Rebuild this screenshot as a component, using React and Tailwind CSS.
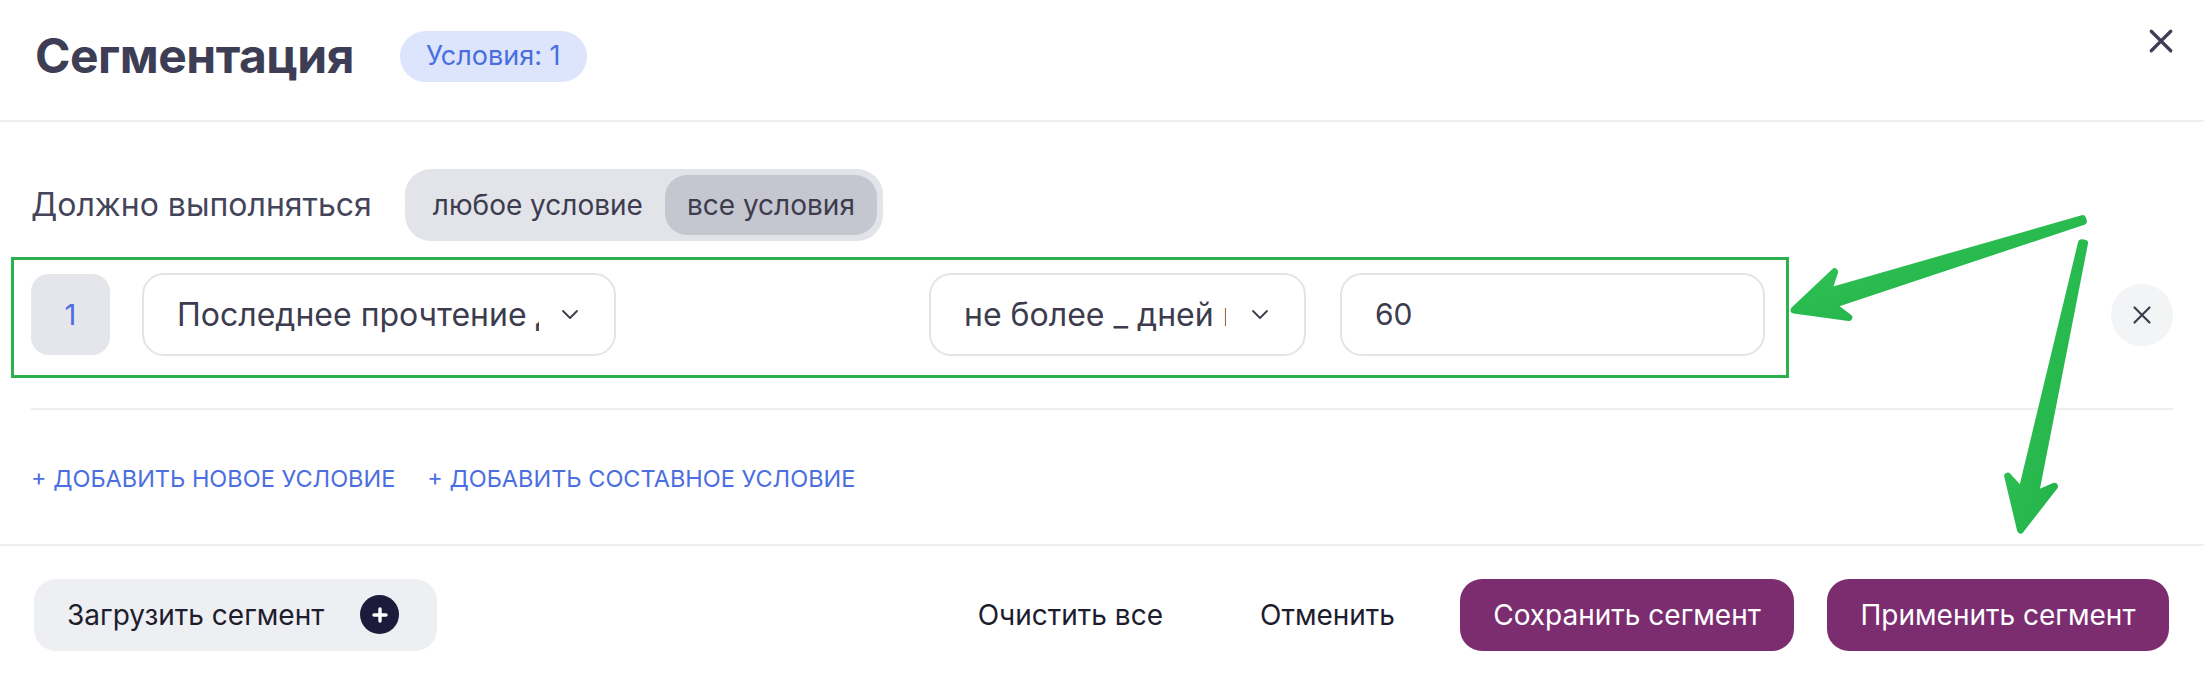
import React from "react";

function XIcon({ size = 26, stroke = 3, color = "#3d3e55" }) {
  return (
    <svg width={size} height={size} viewBox="0 0 24 24" fill="none" stroke={color} strokeWidth={stroke} strokeLinecap="round">
      <path d="M3 3 L21 21 M21 3 L3 21" />
    </svg>
  );
}

function Chevron() {
  return (
    <svg width="20" height="12" viewBox="0 0 20 12" fill="none" stroke="#3c3c4e" strokeWidth="1.8" strokeLinecap="round" strokeLinejoin="round">
      <path d="M3 2 L10 9 L17 2" />
    </svg>
  );
}

function Arrows() {
  return (
    <svg className="absolute left-0 top-0 pointer-events-none" width="2204" height="678" viewBox="0 0 2204 678">
      <defs>
        <linearGradient id="g1" x1="0" y1="0" x2="1" y2="1">
          <stop offset="0" stopColor="#34c759" />
          <stop offset="1" stopColor="#1fae45" />
        </linearGradient>
      </defs>
      <polygon
        points="2083.4,221.4 1832.3,304.9 1848.8,317.6 1794,310 1834.6,271.8 1828.1,291.5 2082.6,218.6"
        fill="url(#g1)"
        stroke="url(#g1)"
        strokeWidth="7"
        strokeLinejoin="round"
      />
      <polygon
        points="2084.5,243.3 2035.3,494.4 2054.5,486.3 2020.5,530 2007.7,476.1 2021.7,491.4 2081.5,242.7"
        fill="url(#g1)"
        stroke="url(#g1)"
        strokeWidth="7"
        strokeLinejoin="round"
      />
    </svg>
  );
}

export default function App() {
  return (
    <div
      className="relative w-[2204px] h-[678px] bg-white overflow-hidden text-[#3c3c4e]"
      style={{ fontFamily: "Inter, 'Noto Sans', sans-serif" }}
    >
      {/* Header */}
      <div className="relative flex items-center h-[122px] pl-[35px] pr-[30px] pb-[8px] border-b-2 border-[#efeff1]">
        <div className="text-[48px] font-bold text-[#3d3e55] tracking-[-0.5px] leading-none">Сегментация</div>
        <div className="ml-[46px] h-[51px] px-[26px] rounded-full bg-[#dce5fb] text-[#4a6ee0] text-[27px] flex items-center">
          Условия: 1
        </div>
        <div className="ml-auto self-start mt-[28px]">
          <XIcon size={26} stroke={3} />
        </div>
      </div>

      {/* Body */}
      <div className="px-[31px]">
        <div className="flex items-center mt-[47px]">
          <div className="text-[32px] text-[#44445a] leading-none">Должно выполняться</div>
          <div className="ml-[33px] flex items-center p-[6px] h-[72px] rounded-[26px] bg-[#e3e3ea]">
            <div className="h-full px-[22px] flex items-center text-[28px] text-[#3c3c4e] rounded-[22px]">любое условие</div>
            <div className="h-full px-[22px] flex items-center text-[28px] text-[#3c3c4e] rounded-[22px] bg-[#c6c6d0]">все условия</div>
          </div>
        </div>

        <div className="flex items-center mt-[32px] h-[83px]">
          <div className="w-[79px] h-[81px] rounded-[18px] bg-[#e5e6ec] flex items-center justify-center text-[29px] text-[#4a6ee0]">1</div>
          <div className="ml-[32px] w-[474px] h-[83px] rounded-[22px] border-2 border-[#e4e4e7] bg-white flex items-center pl-[33px] pr-[34px]">
            <div className="w-[362px] overflow-hidden whitespace-nowrap text-[32px] text-[#3c3c4e]">Последнее прочтение документа</div>
            <div className="ml-auto"><Chevron /></div>
          </div>
          <div className="ml-[313px] w-[377px] h-[83px] rounded-[22px] border-2 border-[#e4e4e7] bg-white flex items-center pl-[33px] pr-[34px]">
            <div className="w-[262px] overflow-hidden whitespace-nowrap text-[32px] text-[#3c3c4e]">не более _ дней назад</div>
            <div className="ml-auto"><Chevron /></div>
          </div>
          <div className="ml-[34px] w-[425px] h-[83px] rounded-[22px] border-2 border-[#e4e4e7] bg-white flex items-center pl-[33px] text-[30px] text-[#3c3c4e]">
            60
          </div>
          <div className="ml-auto w-[62px] h-[62px] rounded-full bg-[#f3f4f6] flex items-center justify-center">
            <XIcon size={20} stroke={2.6} color="#3c3c4e" />
          </div>
        </div>

        <div className="mt-[52px] h-[2px] bg-[#efeff1]" />

        <div className="flex items-center h-[134px] pt-[4px] gap-[32px] text-[23.5px] text-[#4b6ee0] uppercase">
          <div>+ Добавить новое условие</div>
          <div>+ Добавить составное условие</div>
        </div>
      </div>

      {/* Footer */}
      <div className="border-t-2 border-[#efeff1] h-[131px] pt-[8px] flex items-center pl-[34px] pr-[35px]">
        <div className="h-[72px] rounded-[22px] bg-[#eeeff2] flex items-center pl-[33px] pr-[38px] text-[28px] text-[#1d1d2e]">
          Загрузить сегмент
          <div className="ml-[36px] w-[39px] h-[39px] rounded-full bg-[#1c1b3b] flex items-center justify-center">
            <svg width="18" height="18" viewBox="0 0 18 18" stroke="white" strokeWidth="3.4" strokeLinecap="round">
              <path d="M9 3 V15 M3 9 H15" />
            </svg>
          </div>
        </div>
        <div className="ml-auto flex items-center gap-[33px]">
          <div className="px-[32px] text-[28px] text-[#1d1d2e]">Очистить все</div>
          <div className="px-[32px] text-[28px] text-[#1d1d2e]">Отменить</div>
          <div className="h-[72px] w-[334px] rounded-[22px] bg-[#7b2d70] text-white text-[28px] flex items-center justify-center">Сохранить сегмент</div>
          <div className="h-[72px] w-[342px] rounded-[22px] bg-[#7b2d70] text-white text-[28px] flex items-center justify-center">Применить сегмент</div>
        </div>
      </div>

      {/* Annotation overlay */}
      <div className="absolute left-[11px] top-[257px] w-[1778px] h-[121px] border-[3px] border-[#2db14f] pointer-events-none" />
      <Arrows />
    </div>
  );
}
